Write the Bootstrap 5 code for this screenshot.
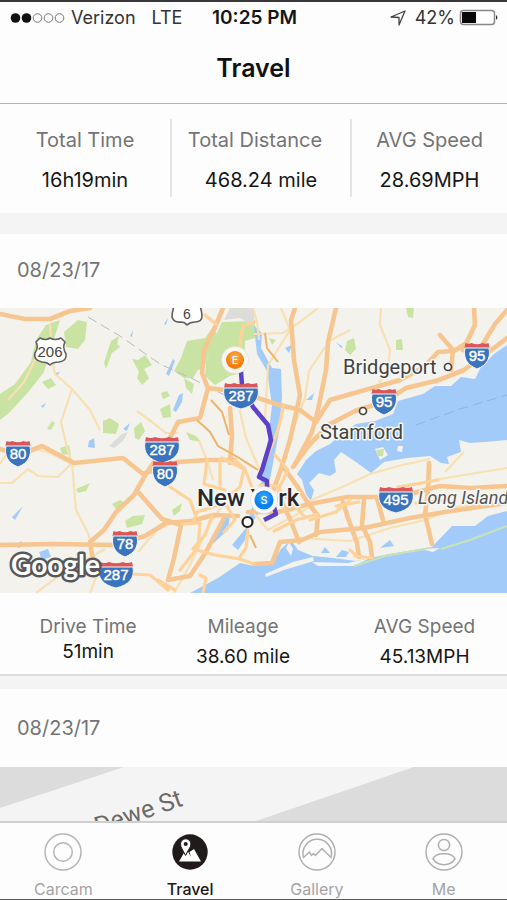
<!DOCTYPE html>
<html lang="en">
<head>
<meta charset="utf-8">
<meta name="viewport" content="width=device-width, initial-scale=1">
<title>Travel</title>
<link href="https://cdn.jsdelivr.net/npm/bootstrap@5.3.0/dist/css/bootstrap.min.css" rel="stylesheet">
<style>
  body { font-family: Inter, "Liberation Sans", sans-serif; background: #fdfdfd; color: #161616; }
  .app { border-top: 2px solid #39373a; border-bottom: 1px solid #555; }
  .status { font-size: 18px; line-height: 24px; padding: 4px 8px 0 10px; color: #333; }
  .status > .side { flex: 1 1 0; }
  .carrier { margin: 0 16px 0 6px; }
  .clock { font-size: 19px; font-weight: 600; color: #161616; }
  .page-title { font-size: 25px; line-height: 32px; font-weight: 600; padding: 22px 0 19px; color: #111; }
  .top-line { border-bottom: 1px solid #b5b5b7; }
  .feed { overflow-y: auto; scrollbar-width: none; min-height: 0; }
  .feed::-webkit-scrollbar { display: none; }
  .totals { display: grid; grid-template-columns: 170fr 180fr 157fr; padding: 15px 0 16px; }
  .totals > div { padding: 8px 0 4px; }
  .totals > div + div { border-left: 2px solid #e4e4e4; }
  .totals dt, .trip dt { font-weight: 400; color: #747476; }
  .totals dt { font-size: 20px; line-height: 26px; margin-bottom: 14px; }
  .totals dd { font-size: 20px; line-height: 26px; margin: 0; }
  .shift { padding-right: 12px; }
  .band { background: #f4f4f4; height: 21px; }
  .band-thin { background: #f4f4f4; height: 15px; border-top: 2px solid #dcdcdc; }
  .day { font-size: 20px; line-height: 26px; font-weight: 400; color: #747476; padding: 23px 17px 25px; margin: 0; }
  .day-low { padding: 26px 17px; }
  .trip { display: grid; grid-template-columns: 176fr 134fr 197fr; padding: 22px 0 5px; }
  .trip > div:last-child { padding-left: 32px; }
  .trip dt { font-size: 19px; line-height: 24px; }
  .trip dd { font-size: 19px; line-height: 24px; margin: 6px 0 0; }
  .trip .close-up dd { margin-top: 1px; }
  .map { display: block; width: 100%; height: auto; font-family: Roboto, sans-serif; }
  .tabs { border-top: 2px solid #cfcfcf; background: #fdfdfd; padding: 10px 0 0; }
  .tabs a { flex: 1 1 0; color: #a4a4a4; font-size: 16px; line-height: 20px; text-decoration: none; }
  .tabs a.active { color: #1c1819; font-weight: 500; }
  .tabs svg { display: block; margin: 0 auto 8px; }
</style>
</head>
<body>
<div class="app vh-100 d-flex flex-column">
  <header class="top-line">
    <div class="status d-flex align-items-center">
      <div class="side d-flex align-items-center">
        <svg width="55" height="12" viewBox="0 0 55 12" aria-hidden="true">
          <g fill="#111"><circle cx="5.500" cy="6" r="4.800"/><circle cx="16.500" cy="6" r="4.800"/></g>
          <g fill="none" stroke="#777"><circle cx="27.500" cy="6" r="4.300"/><circle cx="38.500" cy="6" r="4.300"/><circle cx="49.500" cy="6" r="4.300"/></g>
        </svg>
        <span class="carrier">Verizon</span><span>LTE</span>
      </div>
      <div class="clock text-center">10:25 PM</div>
      <div class="side d-flex align-items-center justify-content-end">
        <svg class="me-2" width="18" height="18" viewBox="0 0 18 18" fill="none" stroke="#444" stroke-width="1.300" stroke-linejoin="round" aria-hidden="true"><path d="M2 8 16 2 10 16 10 8.500Z"/></svg>
        <span>42%</span>
        <svg class="ms-1" width="40" height="18" viewBox="0 0 40 18" aria-hidden="true"><rect x="1.500" y="1.500" width="34" height="14" rx="3" fill="#fff" stroke="#888" stroke-width="1.500"/><path d="M3 3h14v11H3z" fill="#080808"/><path d="M37 6q3 2.500 0 5z" fill="#333"/></svg>
      </div>
    </div>
    <h1 class="page-title text-center m-0">Travel</h1>
  </header>

  <main class="feed flex-grow-1">
    <dl class="totals text-center m-0">
      <div><dt>Total Time</dt><dd>16h19min</dd></div>
      <div><dt class="shift">Total Distance</dt><dd>468.24 mile</dd></div>
      <div><dt>AVG Speed</dt><dd>28.69MPH</dd></div>
    </dl>
    <div class="band"></div>

    <section>
      <h2 class="day">08/23/17</h2>
      <svg class="map" viewBox="0 308 507 285" role="img" aria-label="Route map around New York">
        <defs>
          <g id="i2"><path d="M-11.500-12q3 1.500 6 0 5.500 2.500 11 0 3 1.500 6 0l1 5h-25z" fill="#d9565a"/><path d="M-12-7h24C14 3 10 10 0 14-10 10-14 3-12-7z" fill="#3a74bf" stroke="#f7f7f5" stroke-width="1"/></g>
          <g id="i3"><path d="M-16-12q5 2 9 0 7 2.500 14 0 4 2 9 0l1 5h-34z" fill="#d9565a"/><path d="M-17-7h34C19 4 13 11 0 14-13 11-19 4-17-7z" fill="#3a74bf" stroke="#f7f7f5" stroke-width="1"/></g>
          <radialGradient id="gE" cy=".35"><stop offset="0" stop-color="#ffb04d"/><stop offset="1" stop-color="#f57c0c"/></radialGradient>
          <radialGradient id="gS" cy=".35"><stop offset="0" stop-color="#38a8ff"/><stop offset="1" stop-color="#087fee"/></radialGradient>
        </defs>
        <path fill="#f3f2ed" d="M0 308h507v285H0z"/>

        <!-- parks -->
        <g fill="#c9e4a2">
          <path d="M46 325 60 320 52 345 44 372 30 390 10 412 0 420V394L15 384 31 362 36 340Z"/>
          <path d="M64 332 78 320 87 322 85 340 78 349 66 347Z"/>
          <path d="M111 341 119 336 117 344 120 347 112 353 106 369 104 363 108 350Z"/><path d="M132 359 138 360 145 355 152 365 144 369 149 378 142 385 137 378 139 372Z"/>
          <path d="M187 341 205 338 213 327 218 336 208 356 204 368 198 370 193 378 184 378 174 371 181 358Z"/>
          <path d="M222 322 254 321 258 337 245 341 244 372 230 376 215 385 205 376 206 362 213 342Z"/>
          <path d="M42 382 51 378 56 385 48 389Z"/><path d="M161 393 167 391 170 396 163 399Z"/><path d="M160 409 170 404 171 417 163 418Z"/><path d="M103 421 110 418 119 424 116 434 103 433Z"/><path d="M134 428 141 422 145 431 139 440 135 438Z"/><path d="M47 429 52 421 55 423 51 430Z"/><path d="M186 432 196 436 201 442 190 440Z"/><path d="M60 448 69 445 71 455 62 454Z"/><path d="M76 489 90 483 86 491 78 493Z"/><path d="M112 504 120 500 125 503 116 509Z"/><path d="M125 521 133 516 145 515 142 524 127 528Z"/><path d="M172 510 182 503 180 511 174 516Z"/><path d="M184 378 194 384 192 394 186 388Z"/>
          <path d="M347 341 354 338 356 349 350 355 345 350Z"/><path d="M396 340 402 339 403 350 396 350Z"/><path d="M406 308 414 308 413 318 408 317Z"/><path d="M269 338 276 340 272 345Z"/>
        </g>
        <g fill="#dcdcd9"><path d="M224 320 230 308H254V326L240 318Z"/><path d="M109 446 122 434 128 432 123 441 114 448Z"/></g>

        <!-- water -->
        <g fill="#a3cbfa">
          <path d="M254 326 262 333 261 348 272 368 281 369 282 397 279 432 270 479 258 514 247 530 245 540 238 550 232 545 246 528 251 510 260 490 268 440 272 405 267 371 257 354Z"/>
          <path d="M507 345 494 354 481 367 475 379 461 377 451 386 435 386 423 394 398 401 393 414 375 421 356 424 344 432 330 444 316 451 306 460 297 474 302 480 306 494 311 501 314 490 309 483 319 473 330 476 336 472 334 460 341 452 356 462 371 473 384 462 407 458 430 456 441 463 449 464 447 457 461 452 459 440 470 443 485 442 507 440Z"/>
          <path d="M190 593 218 578 240 563 254 566 272 564 281 549 291 540 298 550 313 556 333 558 356 561 389 554 432 547 452 526 475 526 488 516 507 511V593Z"/>
          <path d="M208 548 222 518 230 514 228 530Z"/><path d="M39 552 48 549 51 557 42 560Z"/><path d="M321 553 325 547 330 553ZM336 557 342 550 349 552 346 557ZM380 548 390 540 394 546Z"/>
          <path d="M166 374 173 359 175 361 169 376ZM179 395 183 393 182 402 176 412 173 410ZM123 429 130 423 127 431ZM89 441 94 438 95 448 88 447ZM41 406 46 403 43 408ZM12 517 23 506 15 520ZM55 373 60 372 57 376ZM285 348 292 345 289 353ZM336 342 343 347 341 348ZM306 400 314 393 312 400ZM164 324 168 318 166 325ZM130 336 133 330 132 337ZM12 546 22 541 20 548Z"/>
        </g>
        <!-- islands and spits -->
        <g fill="#f3f2ed">
          <path d="M265 574 293 562 313 557 314 561 284 570 266 577Z"/><path d="M312 562 348 563 370 558 354 566 318 566Z"/><path d="M289 542 293 549 291 556 286 548Z"/><path d="M420 549 440 548 433 552Z"/><path d="M375 449 383 447 388 455 380 460ZM398 446 403 446 402 452 397 451Z"/>
        </g>
        <path d="M376 450 384 449 383 456 378 456Z" fill="#c9e4a2"/>
        <path d="M354 566 385 556 430 548M441 549 470 540 507 526" fill="none" stroke="#c7e3b5" stroke-width="2"/>
        <g fill="none" stroke="#8db5d8" stroke-width="1" stroke-dasharray="10 5"><path d="M416 425 460 409 507 395"/><path stroke="#bbb" d="M88 317 120 336 160 364 195 380 240 403"/></g>

        <!-- minor roads -->
        <g fill="none" stroke="#f8e0b2" stroke-width="2.200" stroke-linejoin="round">
          <path d="M50 324 52 360 55 374 72 389 61 422 67 448 72 463 76 510 88 533 90 540"/>
          <path d="M72 389 90 410 100 430"/><path d="M0 483 12 483 28 469 38 476 58 477 73 462"/><path d="M0 464 12 446 22 445 50 453 72 464"/>
          <path d="M137 411 152 422 166 433 178 433"/><path d="M254 334 283 333 300 322 318 308"/><path d="M381 308 380 325 390 350 388 370 379 383"/>
          <path d="M281 308 290 330 268 365 265 420"/><path d="M325 347 309 371 305 398 293 430"/><path d="M253 308 257 322 259 340"/>
          <path d="M309 501 340 488 370 474 402 465 430 459M400 488 440 479 470 474 507 468"/><path d="M445 472 464 452"/><path d="M331 340 350 330"/>
          <path d="M300 538 350 541 390 528 425 520 460 506 507 504"/>
          <path d="M138 552 157 530 170 524"/><path d="M36 593 60 575 105 549"/><path d="M174 593 190 565 212 520 223 505"/><path d="M90 593 97 575"/>
          <path d="M251 510 268 530 310 507"/><path d="M238 402 246 438 262 475"/>
          <path d="M199 441 207 460 213 480"/><path d="M8 400 24 382 36 358"/>
        </g>

        <!-- highways -->
        <g fill="none" stroke="#f7c690" stroke-width="4.600" stroke-linejoin="round" stroke-linecap="round">
          <path d="M0 314 25 319 50 319 70 311 90 308M223 308 216 325 204 350 202 373 208 388 200 418 178 422 169 440 161 452 147 472 134 495 116 512 104 530 90 542 92 555 98 570"/>
          <path d="M0 545 55 544 114 545 145 536 166 523 191 521 214 515 238 516"/>
          <path d="M0 449 20 455 42 446 74 463 123 458 143 474 178 462 207 460 235 460"/>
          <path d="M139 493 162 519 181 525 174 558 168 580 190 576 206 552 223 520"/>
          <path d="M208 388 240 392 276 404 300 410 316 422M230 408 232 435 230 463"/>
          <path d="M295 308 291 320 294 360 300 395 290 440 282 466 270 500M336 308 328 342 326 370 318 410 312 432 294 466"/>
          <path d="M316 422 330 400 365 390 400 380 424 367 438 352 454 351 465 344"/>
          <path d="M474 308 475 325 463 350M440 335 453 350 451 370M507 310 495 324 483 344"/>
          <path d="M507 338 486 354 464 370 439 380 406 388 386 401 355 411 330 424 310 444 293 467"/>
          <path d="M248 512 278 512 310 504 347 497 380 497 410 494 440 486 470 488 507 486"/>
          <path d="M254 564 272 563 280 542 302 540 320 532 364 528 410 518 451 511 507 503"/>
          <path d="M282 465 297 486 306 500 318 516 316 535M281 500 290 519 299 542M343 502 348 518 357 543 359 557M364 500 362 525 370 542 372 557M377 498 383 520M429 463 428 490 425 515 432 544"/>
        </g>
        <g fill="none" stroke="#ffd29a" stroke-width="3.200" stroke-linejoin="round" stroke-linecap="round">
          <path d="M254 322 243 326 240 342 241 358M205 315 216 324"/>
          <path d="M222 458 244 469 240 487 219 505 197 512 193 523M170 487 190 500 195 514M207 460 204 484 225 490M220 460 220 485M235 460 245 469 253 490"/>
          <path d="M212 516 205 535 193 549 215 555 240 559 254 564M248 530 246 548 240 557M182 524 200 523 198 547 180 570M205 495 225 503 235 520 224 532M130 574 150 575 168 590M203 593 206 578 200 575M158 580 175 590"/>
          <path d="M275 455 288 470 278 490 284 510M262 470 278 430 284 405M260 485 276 486 304 516M274 531 296 520 318 514"/>
          <path d="M310 520 336 512 350 500M336 506 359 502M355 556 372 558M350 550 358 557M398 487 438 480M416 503 448 500"/>
        </g>
        <g fill="none" stroke="#f0b368" stroke-width="2"><path d="M211 400 222 412 229 435M197 420 210 432 218 446 236 456 258 470M265 333 267 348 278 362M250 535 256 548"/></g>

        <!-- driven route -->
        <path d="M241 372 242 385 253 407 268 425 271 440 262 470 259 477 267 481 267 496 274 507 276 514 264 520" fill="none" stroke="#5b42c8" stroke-width="4.500" stroke-linejoin="round"/>

        <!-- place names -->
        <g fill="#424244" stroke="#f7f7f3" stroke-width="3" stroke-linejoin="round" paint-order="stroke" font-size="20">
          <text x="343" y="374">Bridgeport</text><text x="320" y="439">Stamford</text>
          <text x="197" y="506" font-size="24" font-weight="500" fill="#28282a">New York</text>
          <text x="418" y="504" font-size="18" font-style="italic" fill="#555">Long Island</text>
        </g>
        <g fill="#fff" stroke="#444" stroke-width="1.700"><circle cx="448" cy="367" r="3.500"/><circle cx="363" cy="411" r="3.500"/><circle cx="247.500" cy="522" r="5" stroke="#222" stroke-width="2.200"/></g>

        <!-- road shields -->
        <use href="#i3" x="241" y="395"/><use href="#i2" x="477" y="355"/><use href="#i2" x="384" y="401"/><use href="#i3" x="162" y="449"/><use href="#i2" x="18" y="453"/><use href="#i2" x="165" y="473"/><use href="#i2" x="125" y="543"/><use href="#i3" x="116" y="574"/><use href="#i3" x="396" y="499"/>
        <g fill="#fff" stroke="#606060" stroke-width="1.600" stroke-linejoin="round"><path d="M36 342 40 338Q46 341 50 338 55 341 61 338L65 342Q62 347 66 354 67 361 59 362 53 362 50 365 47 362 42 362 33 360 35 353 39 347 36 342Z"/><path d="M174 306Q172 313 172 317 174 323 181 322 185 322 187 325 190 322 195 322 202 322 202 316 202 312 200 306Z"/></g>
        <g fill="#fff" font-family="Liberation Sans, sans-serif" font-size="15" text-anchor="middle">
          <g stroke="#fff" stroke-width=".4"><text x="241" y="401">287</text><text x="477" y="361">95</text><text x="384" y="407">95</text><text x="18" y="459">80</text><text x="162" y="455">287</text><text x="165" y="479">80</text><text x="125" y="549">78</text><text x="116" y="580">287</text><text x="396" y="505">495</text></g>
          <text x="50" y="357" fill="#444">206</text><text x="187" y="319" fill="#444" font-size="14">6</text>
        </g>

        <!-- start and end pins -->
        <circle cx="235" cy="360" r="13.500" fill="#fbf7f0" stroke="#ddd" stroke-width=".6"/><circle cx="235" cy="360" r="9" fill="url(#gE)"/>
        <circle cx="264" cy="500" r="13.500" fill="#f7f8fa" stroke="#ddd" stroke-width=".6"/><circle cx="264" cy="500" r="9.500" fill="url(#gS)"/>
        <g fill="#fff" font-family="Inter, sans-serif" font-size="11" font-weight="500" text-anchor="middle"><text x="235" y="364">E</text><text x="264" y="504">S</text></g>
        <text x="11" y="575" font-family="Lato, sans-serif" font-size="28" font-weight="700" fill="#fff" stroke="#58585a" stroke-width="5" stroke-linejoin="round" paint-order="stroke">Google</text>
      </svg>
      <dl class="trip text-center m-0">
        <div class="close-up"><dt>Drive Time</dt><dd>51min</dd></div>
        <div><dt>Mileage</dt><dd>38.60 mile</dd></div>
        <div><dt>AVG Speed</dt><dd>45.13MPH</dd></div>
      </dl>
    </section>
    <div class="band-thin"></div>

    <section>
      <h2 class="day day-low">08/23/17</h2>
      <svg class="map" viewBox="0 767 507 285" role="img" aria-label="Route map near Dewe St">
        <path fill="#dcdcdc" d="M0 767h507v285H0z"/>
        <path fill="#f4f4f4" d="M124 767H414L253 822 0 908V808Z"/>
        <text transform="translate(98 835) rotate(-19)" font-size="25" fill="#6b6a65">Dewe St</text>
      </svg>
    </section>
  </main>

  <nav class="tabs d-flex text-center" aria-label="Main">
    <a href="#carcam"><svg width="38" height="38" viewBox="0 0 38 38" fill="none" stroke="#b5b5b5" stroke-width="1.500" aria-hidden="true"><circle cx="19" cy="19" r="18"/><circle cx="19" cy="19" r="9.300"/></svg>Carcam</a>
    <a href="#travel" class="active" aria-current="page"><svg width="38" height="38" viewBox="0 0 38 38" aria-hidden="true"><circle cx="19" cy="19" r="17.700" fill="#201a1b"/><path d="M8 28.500 13.500 19 15 22 17 18.500 20 24 18.500 19 23 16 30 28.500Z" fill="#fff"/><path d="M14.500 22.500C12 17 9.500 14.500 9.500 11a5.200 5.200 0 0 1 10.400 0c0 3.500-3 6-5.400 11.500Z" fill="#fff" stroke="#201a1b" stroke-width="1"/><circle cx="14.700" cy="11" r="2" fill="#201a1b"/></svg>Travel</a>
    <a href="#gallery"><svg width="38" height="38" viewBox="0 0 38 38" fill="none" stroke="#b0b0b0" stroke-width="1.500" stroke-linejoin="round" aria-hidden="true"><circle cx="19" cy="19" r="18"/><path d="M5.500 24.500A14.300 14.300 0 1 1 33 24.500L24 15.500 17.500 22.500 15.500 20.500 13.500 22.500 11.500 19Z"/></svg>Gallery</a>
    <a href="#me"><svg width="38" height="38" viewBox="0 0 38 38" fill="none" stroke="#b0b0b0" stroke-width="1.500" aria-hidden="true"><circle cx="19" cy="19" r="18"/><circle cx="19" cy="12" r="5.600"/><path d="M8 26C10 19 28 19 30 26 25 33.500 13 33.500 8 26Z"/></svg>Me</a>
  </nav>
</div>
<script src="https://cdn.jsdelivr.net/npm/bootstrap@5.3.0/dist/js/bootstrap.bundle.min.js"></script>
</body>
</html>
